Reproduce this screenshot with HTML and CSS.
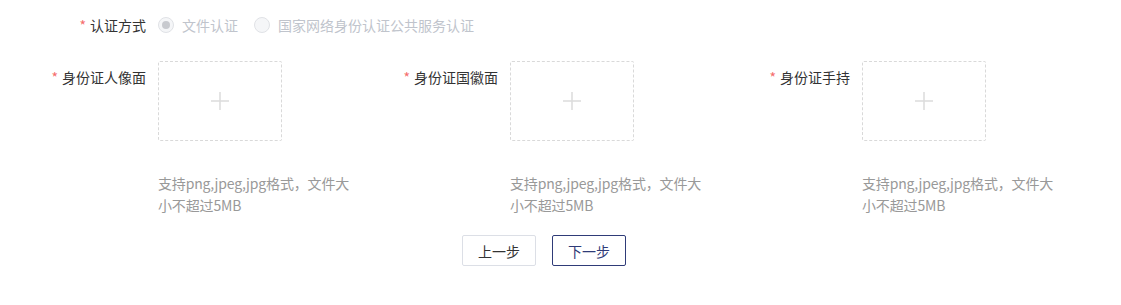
FILE: index.html
```html
<!DOCTYPE html>
<html lang="zh-CN">
<head>
<meta charset="utf-8">
<link rel="stylesheet" href="styles.css">
</head>
<body>
<div class="form">
  <div class="row row-method">
    <div class="label"><span class="req">*</span>认证方式</div>
    <div class="radios">
      <label class="radio checked"><span class="radio-dot"></span><span class="radio-text">文件认证</span></label>
      <label class="radio"><span class="radio-dot"></span><span class="radio-text">国家网络身份认证公共服务认证</span></label>
    </div>
  </div>
  <div class="row row-uploads">
    <div class="col">
      <div class="label"><span class="req">*</span>身份证人像面</div>
      <div class="field">
        <div class="upload"><svg class="plus" width="20" height="20" viewBox="0 0 20 20"><path d="M10 1v18M1 10h18" stroke="#dcdcdc" stroke-width="1.5" fill="none"/></svg></div>
        <div class="hint">支持png,jpeg,jpg格式，文件大<br>小不超过5MB</div>
      </div>
    </div>
    <div class="col">
      <div class="label"><span class="req">*</span>身份证国徽面</div>
      <div class="field">
        <div class="upload"><svg class="plus" width="20" height="20" viewBox="0 0 20 20"><path d="M10 1v18M1 10h18" stroke="#dcdcdc" stroke-width="1.5" fill="none"/></svg></div>
        <div class="hint">支持png,jpeg,jpg格式，文件大<br>小不超过5MB</div>
      </div>
    </div>
    <div class="col">
      <div class="label"><span class="req">*</span>身份证手持</div>
      <div class="field">
        <div class="upload"><svg class="plus" width="20" height="20" viewBox="0 0 20 20"><path d="M10 1v18M1 10h18" stroke="#dcdcdc" stroke-width="1.5" fill="none"/></svg></div>
        <div class="hint">支持png,jpeg,jpg格式，文件大<br>小不超过5MB</div>
      </div>
    </div>
  </div>
  <div class="actions">
    <button class="btn">上一步</button>
    <button class="btn btn-primary">下一步</button>
  </div>
</div>
</body>
</html>
```
FILE: styles.css
```css
html, body {
  margin: 0;
  padding: 0;
  background: #fff;
}
body {
  font-family: "Noto Sans CJK SC", "Microsoft YaHei", sans-serif;
  font-size: 14px;
  color: #333;
}
.form {
  padding-top: 9px;
}
.row {
  display: flex;
}
.label {
  box-sizing: border-box;
  width: 158px;
  padding-right: 12px;
  text-align: right;
  line-height: 32px;
  height: 32px;
  color: #333;
  white-space: nowrap;
}
.req {
  color: #f56c6c;
  margin-right: 4px;
}
.radios {
  display: flex;
  align-items: center;
  height: 32px;
}
.radio {
  display: flex;
  align-items: center;
  margin-right: 16px;
  color: #c0c4cc;
}
.radio-dot {
  box-sizing: border-box;
  width: 16px;
  height: 16px;
  border: 1px solid #e0e2e6;
  border-radius: 50%;
  background: #f5f6f8;
  margin-right: 8px;
  display: flex;
  align-items: center;
  justify-content: center;
}
.radio.checked .radio-dot::after {
  content: "";
  width: 8px;
  height: 8px;
  border-radius: 50%;
  background: #c8cacf;
}
.row-uploads {
  margin-top: 20px;
}
.col {
  width: 352px;
  display: flex;
}
.upload {
  box-sizing: border-box;
  width: 124px;
  height: 80px;
  border: 1px dashed #d9d9d9;
  border-radius: 2px;
  display: flex;
  align-items: center;
  justify-content: center;
}
.hint {
  margin-top: 31px;
  line-height: 22px;
  color: #999;
  white-space: nowrap;
  letter-spacing: -0.15px;
}
.actions {
  width: 1088px;
  display: flex;
  justify-content: center;
  gap: 16px;
  margin-top: 19px;
}
.btn {
  box-sizing: border-box;
  width: 74px;
  height: 31px;
  background: #fff;
  border: 1px solid #dcdfe6;
  border-radius: 2px;
  font-family: inherit;
  font-size: 14px;
  color: #333;
  padding: 0;
  cursor: pointer;
}
.btn-primary {
  border-color: #2f3b78;
  color: #2f3b78;
}
```
